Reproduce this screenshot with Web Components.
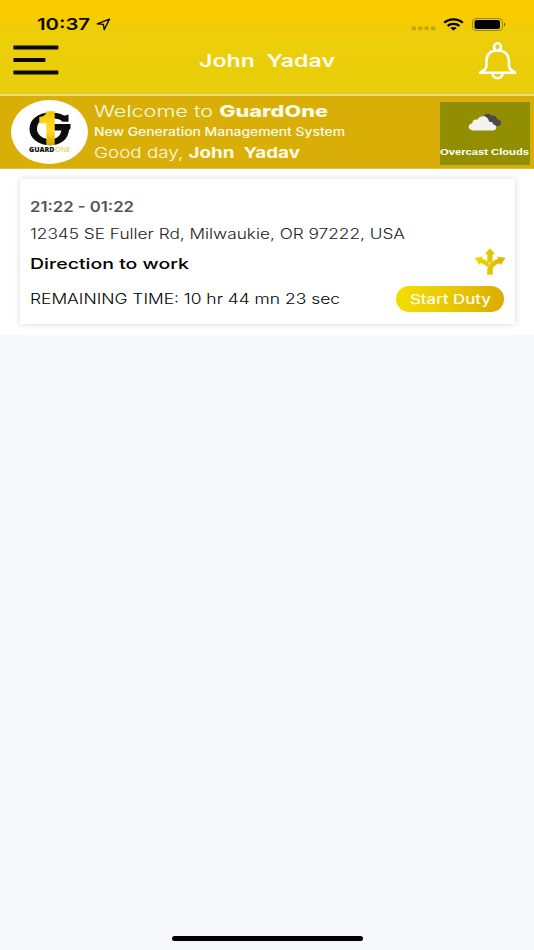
<!DOCTYPE html>
<html lang="en">
<head>
<meta charset="utf-8">
<title>GuardOne</title>
<style>
html,body{margin:0;height:100%}
body{background:#f6f8fa;font-family:Inter,"Liberation Sans",sans-serif;overflow:hidden}
</style>
</head>
<body>
<guard-app></guard-app>
<script>
const define = (name, html, ready) => customElements.define(name, class extends HTMLElement {
  connectedCallback() {
    if (this.shadowRoot) return;
    const t = document.createElement('template');
    t.innerHTML = html;
    this.attachShadow({mode: 'open'}).append(t.content.cloneNode(true));
    if (ready) ready(this);
  }
});

// Wide text: one line stretched horizontally to the width given in the "w" attribute.
define('wide-text', `<style>
:host{display:block;white-space:pre;overflow:visible;flex:none}
span{display:inline-block;transform-origin:0 50%;vertical-align:top}
</style><span><slot></slot></span>`, el => {
  const s = el.shadowRoot.querySelector('span');
  const w = +el.getAttribute('w');
  el.style.width = w + 'px';
  const natural = s.getBoundingClientRect().width;
  if (natural) s.style.transform = `scaleX(${w / natural})`;
});

define('status-bar', `<style>
:host{display:flex;align-items:center;height:20px;padding:14px 28px 0 37px;color:#0c0a00}
wide-text{font-size:16.4px;font-weight:600;line-height:20px}
.loc{margin-left:6px}
.gap{flex:1}
.dots{margin:9px 7px 0 0}
.wifi{margin-right:8px}
svg{display:block;flex:none}
</style>
<wide-text w="53">10:37</wide-text>
<svg class="loc" width="15" height="13" viewBox="0 0 15 13"><path d="M1.2 5.9 13.5 1.1 8.2 11.7 7.4 6.4Z" fill="none" stroke="#0c0a00" stroke-width="1.4" stroke-linejoin="round"/></svg>
<div class="gap"></div>
<svg class="dots" width="25" height="5" viewBox="0 0 25 5" fill="#bfa508"><rect x=".6" y=".6" width="4.6" height="3.6" rx="1.4"/><rect x="7" y=".6" width="4.6" height="3.6" rx="1.4"/><rect x="13.4" y=".6" width="4.6" height="3.6" rx="1.4"/><rect x="19.8" y=".6" width="4.6" height="3.6" rx="1.4"/></svg>
<svg class="wifi" width="21" height="13" viewBox="0 0 21 13" fill="none" stroke="#000" stroke-width="2.2"><path d="M1.2 4.8C6.3.2 14.7.2 19.8 4.8M4.6 7.9c3.2-2.8 8.6-2.8 11.8 0"/><path d="M10.5 12.6 7.3 10.1c1.7-1.4 4.7-1.4 6.4 0z" fill="#000" stroke="none"/></svg>
<svg width="34" height="13" viewBox="0 0 34 13"><rect x=".5" y=".5" width="30" height="12" rx="3.5" fill="none" stroke="#9c8405"/><rect x="2.5" y="2" width="25.5" height="9" rx="2" fill="#000"/><path d="M32 4.5c1.9.8 1.9 3.2 0 4z" fill="#7d6a04"/></svg>`);

define('nav-bar', `<style>
:host{display:grid;grid-template-columns:1fr auto 1fr;align-items:center;height:54px;padding:0 17px 8px 13px;box-sizing:border-box;color:#fffdf0}
wide-text{font-size:17.5px;font-weight:600;line-height:24px;margin-left:4px}
svg{display:block}
.bell{justify-self:end}
.menu{margin-top:-3px}
</style>
<svg class="menu" width="46" height="30" viewBox="0 0 46 30" fill="#0a0900"><rect x=".4" y=".6" width="45" height="4" rx=".8"/><rect x=".4" y="13.1" width="32" height="4" rx=".8"/><rect x=".4" y="25.6" width="45" height="4" rx=".8"/></svg>
<wide-text w="136">John  Yadav</wide-text>
<svg class="bell" width="40" height="38" viewBox="0 0 40 38" fill="none" stroke="#fff" stroke-width="2.6" stroke-linejoin="round"><circle cx="20.5" cy="4.8" r="3.5"/><path d="M9.4 19.5C9.4 12.2 13.7 8.4 20.5 8.4s11.5 3.8 11.5 11.1v4.2c0 3.5 2.6 5 6.2 7H3c3.8-2 6.4-3.5 6.4-7z"/><path d="M15.4 31c.4 6.9 9.9 6.9 10.3 0"/></svg>`);

define('guard-logo', `<style>
:host{display:flex;flex-direction:column;align-items:center;width:77px;height:64px;box-sizing:border-box;padding-top:11px;border-radius:50%;background:#fff;flex:none}
svg{display:block}
.name{display:flex;font:800 6.6px/8px "Open Sans","Noto Sans",sans-serif;color:#111}
.one{color:#e6c026;font-weight:400;margin-left:1px}
</style>
<svg width="42" height="35" viewBox="0 0 42 35">
<defs><linearGradient id="g" x2="0" y2="1"><stop stop-color="#efc400"/><stop offset=".55" stop-color="#ffe02b"/><stop offset="1" stop-color="#d9a400"/></linearGradient></defs>
<path d="M39.5 3.2V10.800H33.500C31.500 8.600 28.500 7.600 24.600 7.600H17C11.500 8.800 8 12.600 8 18S13 28.200 21.500 28.200c5.500 0 9.500-2 10.900-8.600H25V13H41.500v4.600l-1.500 1.400C39.200 28.300 32 34.200 21 34.200 9.400 34.200.5 27.400.5 18S9.400 1.600 21 1.600c6 0 10.600 1.100 14 3 1.900-.1 3.300-.6 4.500-1.400z" fill="#0c0c0c"/>
<path d="M17.800.3H25.700V34H17.300V12.200H10.300V6C14 6 16.800 4 17.800.3z" fill="url(#g)"/>
</svg>
<div class="name"><wide-text w="25.5">GUARD</wide-text><wide-text class="one" w="15.5">ONE</wide-text></div>`);

define('weather-tile', `<style>
:host{display:flex;flex-direction:column;align-items:center;width:90px;height:64px;box-sizing:border-box;padding-top:11px;background:#918f01;color:#fff;flex:none}
svg{display:block}
wide-text{font:bold 9.6px/12px "Liberation Sans",sans-serif;margin:15px 1px 0 0}
</style>
<svg width="34" height="18" viewBox="0 0 34 18"><path d="M15.5 4.800C15.800.8 20.500-.8 23.500 2.600c3.200-.6 5.200 1 5.600 3.700 5.400.7 5.200 6.700.8 6.700H20z" fill="#4a4a4a"/><path d="M5.400 17.400C-.7 17.200-.8 10.800 4.300 10.400 4.200 6.700 7.300 5.700 9.300 6.800 12.200 1.400 20.400 2.300 21.100 8.800c2.700-.4 4 1 4.100 2.700 4.100.4 4.200 5.700-.3 5.900z" fill="#f3f3f1"/></svg>
<wide-text w="89">Overcast Clouds</wide-text>`);

define('welcome-banner', `<style>
:host{display:flex;height:73px;box-sizing:border-box;padding:4px 4px 5px 11px;background:#d9af07;color:#fffbe9;border-bottom:1px solid #e3c13c}
.lines{flex:1;padding-left:6px}
b{font-weight:800}
.a{font-size:16.5px;line-height:22px;font-weight:300}
.b{font-size:11.3px;line-height:20px;font-weight:500}
.c{font-size:15px;line-height:21px;font-weight:300}
.c b{font-weight:700}
weather-tile{margin-top:2px;height:63px}
</style>
<guard-logo></guard-logo>
<div class="lines">
<wide-text class="a" w="234">Welcome to <b>GuardOne</b></wide-text>
<wide-text class="b" w="251">New Generation Management System</wide-text>
<wide-text class="c" w="206">Good day, <b>John  Yadav</b></wide-text>
</div>
<weather-tile></weather-tile>`);

define('duty-button', `<style>
:host{display:flex;align-items:center;justify-content:center;width:108px;height:26px;border-radius:13px;background:linear-gradient(100deg,#f3df00,#e9c803 50%,#dbab00);color:#fffef0}
wide-text{font-size:13.2px;line-height:26px;font-weight:500}
</style><wide-text w="81"><slot></slot></wide-text>`);

define('shift-card', `<style>
:host{display:block;box-sizing:border-box;height:145px;padding:18px 11px 0 10px;background:#fff;box-shadow:0 0 6px rgba(0,0,0,.17)}
.time{font-size:14.7px;line-height:20px;font-weight:600;color:#555}
.addr{font-size:13.8px;line-height:34px;font-weight:300;color:#222}
.row{display:flex;justify-content:space-between;align-items:center}
.dir{height:27px}
.dir wide-text{font-size:14.7px;line-height:27px;font-weight:500;color:#000}
.left{height:26px;margin-top:8px}
.left wide-text{font-size:13.8px;line-height:26px;font-weight:300;color:#000}
svg{display:block;margin-right:-2px;margin-top:-6px}
</style>
<wide-text class="time" w="104">21:22 - 01:22</wide-text>
<wide-text class="addr" w="375">12345 SE Fuller Rd, Milwaukie, OR 97222, USA</wide-text>
<div class="row dir"><wide-text w="159">Direction to work</wide-text>
<svg width="32" height="27" viewBox="0 0 32 27"><defs><linearGradient id="d" gradientUnits="userSpaceOnUse" x1="0" y1="0" x2="32" y2="0"><stop stop-color="#f2dc00"/><stop offset="1" stop-color="#dcae04"/></linearGradient></defs><g fill="url(#d)"><path d="M16 .3 21 6.2H18.5V13L16 15.6 13.3 13V6.2H10.8Z"/><path d="M.5 10.1 8.9 8.6 8.1 10.700C11.5 11.4 13.900 13.200 15.5 16L13.4 19.2C11.700 17.200 9.800 15.800 6.4 15.200L5.400 16.900Z"/><path d="M31.5 10.100 23.200 8.600 24 10.700C17.5 12.700 13.200 17.800 13.200 22.500V26.800H18.700V23C18.700 19 21.200 16.300 25.600 15.200L26.600 16.900Z"/></g></svg></div>
<div class="row left"><wide-text w="310">REMAINING TIME: 10 hr 44 mn 23 sec</wide-text><duty-button>Start Duty</duty-button></div>`);

define('guard-app', `<style>
:host{display:flex;flex-direction:column;height:950px;width:534px;background:#f6f8fa}
header{height:94px;background:linear-gradient(#f8cc00 0,#f6cb01 26px,#edcd08 26px,#e9ce0b 94px);border-bottom:2px solid #f0dc86}
nav-bar{margin-top:4px}
main{background:#fff;height:166px;box-sizing:border-box;padding:10px 19px 0 20px;flex:none}
footer{margin:auto auto 9px;width:191px;height:5px;border-radius:3px;background:#000}
</style>
<header><status-bar></status-bar><nav-bar></nav-bar></header>
<welcome-banner></welcome-banner>
<main><shift-card></shift-card></main>
<footer></footer>`);
</script>
</body>
</html>
